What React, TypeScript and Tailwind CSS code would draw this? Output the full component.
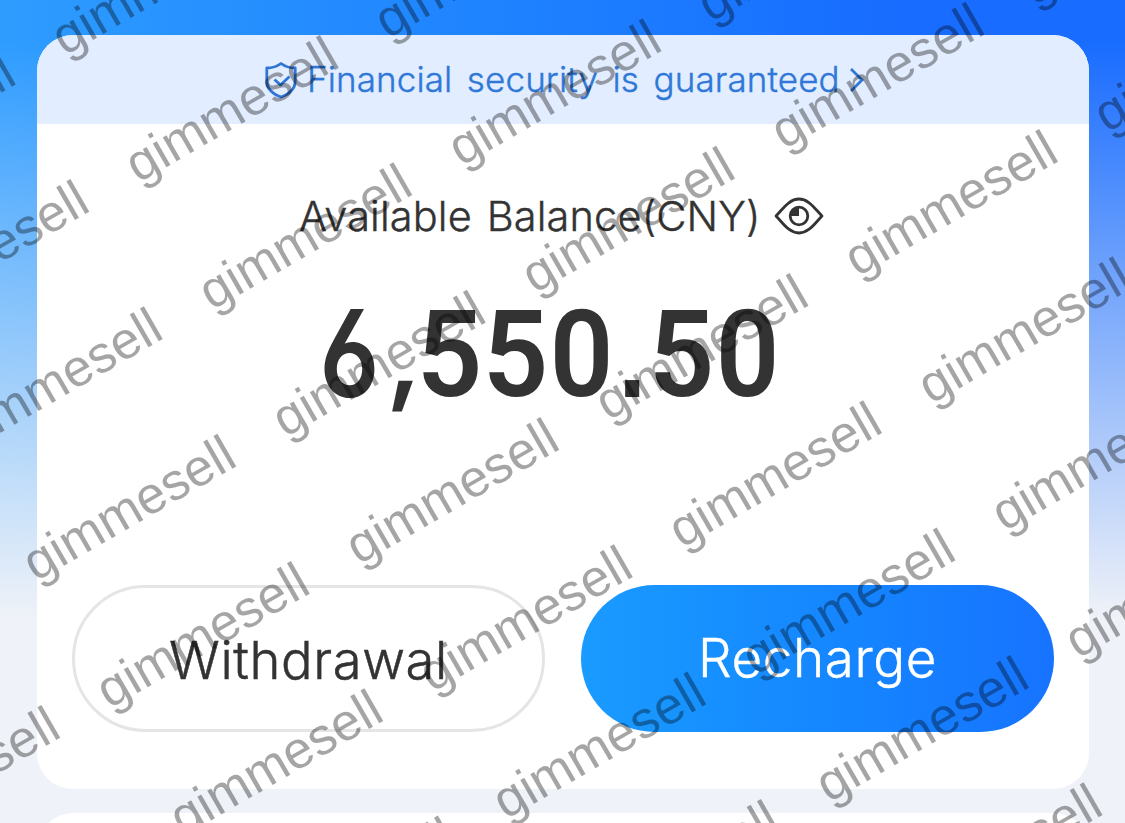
const digits: [string, string, string][] = [
  ["6", "w-[66px]", "translate-y-px scale-x-82 font-['Inter'] font-semibold [font-feature-settings:'cv03','ss01']"],
  [",", "w-[34px]", "translate-x-[6px] translate-y-[2px] scale-x-90 scale-y-86 -skew-x-3 font-['Inter'] font-semibold"],
  ["5", "w-[66px]", "translate-y-[3px] scale-x-95 font-['Roboto'] font-semibold"],
  ["5", "w-[66px]", "translate-y-[3px] scale-x-95 font-['Roboto'] font-semibold"],
  ["0", "w-[66px]", "translate-y-[3px] scale-x-92 font-['Roboto'] font-semibold"],
  [".", "w-[34px]", "translate-y-px scale-x-80 font-['Inter'] font-semibold [font-feature-settings:'ss07']"],
  ["5", "w-[66px]", "translate-y-[3px] scale-x-95 font-['Roboto'] font-semibold"],
  ["0", "w-[66px]", "translate-y-[3px] scale-x-92 font-['Roboto'] font-semibold"],
];

function ShieldIcon() {
  return (
    <svg width="34" height="40" viewBox="0 0 34 40" fill="none" stroke="#2f74d6" strokeWidth="2.8" strokeLinejoin="round">
      <path d="M17 3.500C13 6.500 8 8 2.800 8V21c0 8 6 13 14.200 16 8.200-3 14.200-8 14.200-16V8C26 8 21 6.500 17 3.500Z" />
      <path d="m10.500 19.500 6 5.500 9-8.500" />
    </svg>
  );
}

function EyeIcon() {
  return (
    <svg width="50" height="40" viewBox="0 0 50 40" fill="none" stroke="#333" strokeWidth="2.800" strokeLinejoin="round">
      <path d="M2 20C9 13 15 3 25 3s16 10 23 17c-7 7-13 17-23 17S9 27 2 20Z" />
      <circle cx="25" cy="20" r="8.800" />
      <path d="M25 11v9h-9a9 9 0 0 1 9-9Z" fill="#333" stroke="none" />
    </svg>
  );
}

function Watermark() {
  return (
    <div className="pointer-events-none absolute left-0 top-0 origin-top-left -rotate-30 opacity-35">
      <div className="-ml-[548px] -mt-[114px] grid w-[1728px] auto-rows-[147px] grid-cols-6 font-['Liberation_Sans'] text-[52px] leading-[60px] tracking-[0.1px] text-black">
        {Array.from({ length: 60 }, (_, i) => (
          <span key={i}>gimmesell</span>
        ))}
      </div>
    </div>
  );
}

export default function App() {
  return (
    <div className="relative h-[823px] w-[1125px] overflow-hidden bg-linear-to-r from-[#2e9cff] to-[#186cff] to-80% font-['Inter',sans-serif]">
      <div className="h-full bg-linear-to-b from-[#eff2f8]/0 from-5% to-[#eff2f8] to-75% px-[37px] pt-[35px]">
        <main className="flex h-[754px] w-[1052px] flex-col overflow-hidden rounded-[36px] bg-white">
          <div className="flex h-[89px] shrink-0 items-center bg-[#e2edff] pl-[227px] text-[#2f78d8]">
            <ShieldIcon />
            <span className="ml-[9px] whitespace-nowrap text-[35px] font-[350] tracking-[0.12px] [-webkit-text-stroke:0.4px] [word-spacing:4.5px]">Financial security is guaranteed</span>
            <svg className="ml-2" width="18" height="28" viewBox="0 0 18 28" fill="none" stroke="currentColor" strokeWidth="2.800">
              <path d="m3 3 11 11L3 25" />
            </svg>
          </div>
          <div className="mt-[68px] flex h-12 items-center pl-[262px] text-[#333]">
            <span className="mr-[13px] whitespace-nowrap text-[41.5px] font-[350] tracking-[0.15px] [-webkit-text-stroke:0.4px] [word-spacing:3px]">Available Balance(CNY)</span>
            <EyeIcon />
          </div>
          <div className="mt-[42px] flex h-[140px] pl-[280px] text-[121px] leading-[140px] text-[#333]">
            {digits.map(([c, w, look], i) => (
              <span key={i} className={`${w} flex justify-center`}>
                <span className={look}>{c}</span>
              </span>
            ))}
          </div>
          <div className="mt-auto mb-[57px] flex gap-9 px-[35px]">
            <button className="h-[147px] w-[473px] rounded-full border-[3px] border-[#e5e5e5] pt-1 text-[52.5px] font-[350] tracking-[0.6px] text-[#333] [-webkit-text-stroke:0.5px]">Withdrawal</button>
            <button className="h-[147px] w-[473px] rounded-full bg-linear-to-r from-[#1a9bff] to-[#1773ff] text-[53px] font-[350] tracking-[0.6px] text-white [-webkit-text-stroke:0.4px]">Recharge</button>
          </div>
        </main>
        <div className="mt-6 h-[100px] w-[1052px] rounded-[36px] bg-white" />
      </div>
      <Watermark />
    </div>
  );
}
